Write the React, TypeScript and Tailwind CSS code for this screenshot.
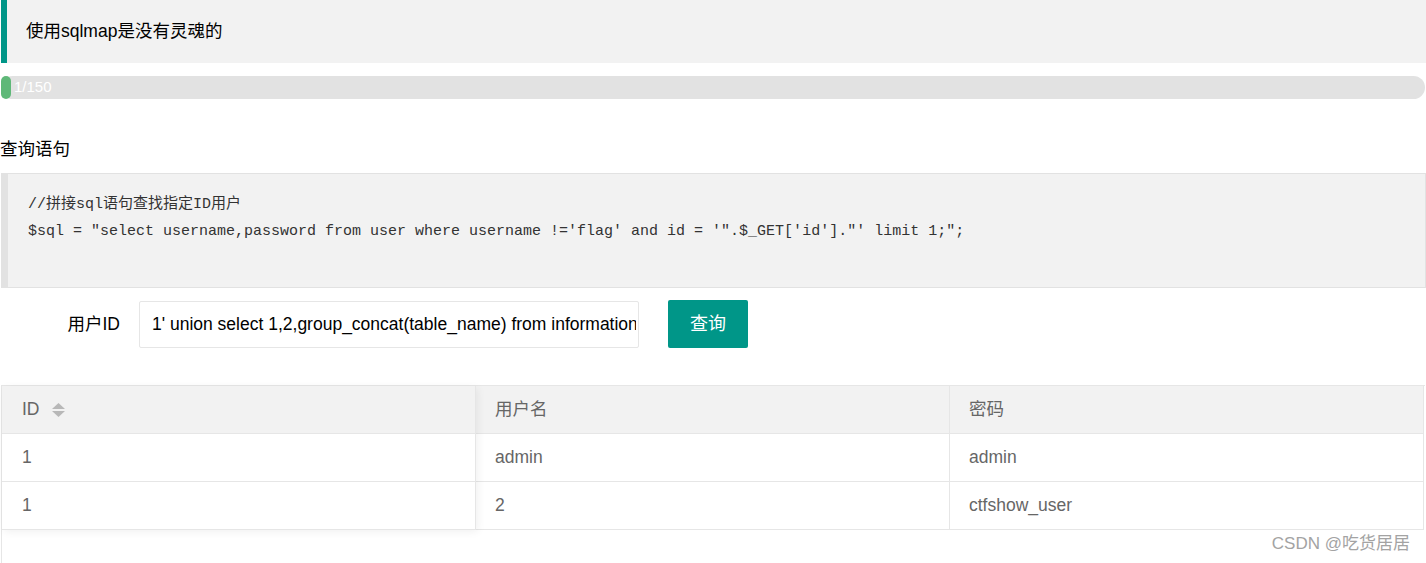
const sans = "font-['Liberation_Sans','Noto_Sans_CJK_SC',sans-serif]";
const mono = "font-['Liberation_Mono','Noto_Sans_CJK_SC',monospace]";

const rows = [
  ["1", "admin", "admin"],
  ["1", "2", "ctfshow_user"],
];

function SortIcon() {
  return (
    <svg width="13" height="16" viewBox="0 0 13 16" className="ml-[12px]">
      <polygon points="6.5,1 13,7 0,7" fill="#b8b8b8" />
      <polygon points="0,9 13,9 6.5,15" fill="#b8b8b8" />
    </svg>
  );
}

export default function App() {
  return (
    <div className={`relative h-[563px] w-[1426px] overflow-hidden bg-white pl-px text-[17.5px] ${sans}`}>
      {/* Tip */}
      <div className="flex h-[63px] items-center border-l-[6px] border-[#009688] bg-[#f2f2f2] pl-[19px] text-[#000]">
        使用sqlmap是没有灵魂的
      </div>

      {/* Progress */}
      <div className="mt-[13px] flex h-[23px] w-[1424px] items-center rounded-full bg-[#e2e2e2]">
        <div className="h-full w-[10px] rounded-full bg-[#5FB878]" />
        <span className="ml-[3px] text-[15px] text-white">1/150</span>
      </div>

      {/* Title */}
      <div className="-ml-px mt-[38px] h-[25px] leading-[25px] text-[#000]">查询语句</div>

      {/* Code */}
      <div className="mt-[11px] border-y border-r border-l-[7px] border-[#e2e2e2] bg-[#f2f2f2] pb-[15px] pl-[20px] pt-[17px]">
        <pre className={`text-[15px] leading-[27px] text-[#333] ${mono}`}>
          {"//拼接sql语句查找指定ID用户\n"}
          {"$sql = \"select username,password from user where username !='flag' and id = '\".$_GET['id'].\"' limit 1;\";\n"}
          {" "}
        </pre>
      </div>

      {/* Form */}
      <div className="mt-[12px] flex items-center">
        <label className="w-[138px] pr-[19px] text-right text-[#000]">用户ID</label>
        <input
          readOnly
          value="1' union select 1,2,group_concat(table_name) from information_schema.tables where table_schema=database()--+"
          className={`h-[47px] w-[500px] rounded-[2px] border border-[#e6e6e6] bg-white pl-[12px] pr-[2px] text-[17.5px] text-[#000] outline-none ${sans}`}
        />
        <button className="ml-[29px] h-[48px] w-[80px] rounded-[2px] bg-[#009688] text-[18px] text-white">
          查询
        </button>
      </div>

      {/* Table */}
      <div className="mt-[37px] h-[200px] w-[1424px] border-l border-[#e6e6e6]">
        <div className="flex border-t border-[#e6e6e6] text-[#666]">
          <div className="relative z-10 w-[474px] bg-white shadow-[2px_2px_8px_rgba(0,0,0,0.06)]">
            <div className="flex h-[48px] items-center border-b border-r border-[#e6e6e6] bg-[#f2f2f2] pl-[20px]">
              ID
              <SortIcon />
            </div>
            {rows.map((r, i) => (
              <div key={i} className="flex h-[48px] items-center border-b border-r border-[#e6e6e6] pl-[20px]">
                {r[0]}
              </div>
            ))}
          </div>
          {[1, 2].map((c) => (
            <div key={c} className="w-[474px]">
              <div className="flex h-[48px] items-center border-b border-r border-[#e6e6e6] bg-[#f2f2f2] pl-[19px]">
                {c === 1 ? "用户名" : "密码"}
              </div>
              {rows.map((r, i) => (
                <div key={i} className="flex h-[48px] items-center border-b border-r border-[#e6e6e6] pl-[19px]">
                  {r[c]}
                </div>
              ))}
            </div>
          ))}
        </div>
      </div>

      <div className="absolute bottom-[7px] right-[16px] text-[17px] text-[#a3a3a3]">CSDN @吃货居居</div>
    </div>
  );
}
